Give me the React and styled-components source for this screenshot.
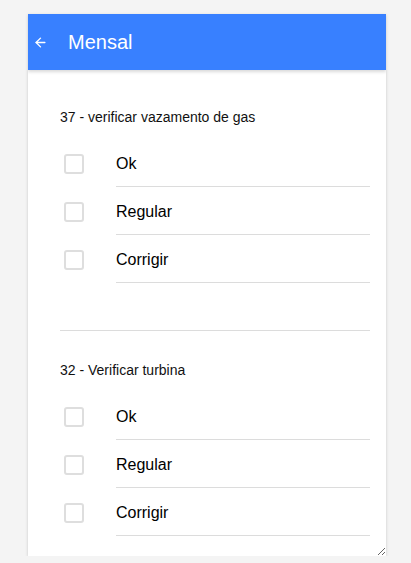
import React from 'react';
import styled, { createGlobalStyle } from 'styled-components';
import { ArrowLeft } from 'lucide-react';

const GlobalStyle = createGlobalStyle`
  html, body {
    margin: 0;
    padding: 0;
    background: #f4f4f4;
    font-family: "Liberation Sans", Arial, sans-serif;
  }
`;

const Page = styled.div`
  padding: 14px 0 0 28px;
`;

const Card = styled.div`
  width: 358px;
  height: 542px;
  background: #fff;
  box-shadow: 0 1px 3px rgba(0, 0, 0, 0.18);
  resize: both;
  overflow: hidden;
  display: flex;
  flex-direction: column;
`;

const Toolbar = styled.div`
  height: 56px;
  flex-shrink: 0;
  background: #3880ff;
  display: flex;
  align-items: center;
  color: #fff;
  box-shadow: 0 2px 3px rgba(0, 0, 0, 0.15);
  position: relative;
  z-index: 1;
`;

const BackButton = styled.button`
  background: none;
  border: 0;
  padding: 0;
  margin: 0;
  width: 24px;
  height: 24px;
  display: flex;
  align-items: center;
  justify-content: center;
  color: #fff;
`;

const Title = styled.h1`
  margin: 1px 0 0 16px;
  font-size: 20px;
  font-weight: 400;
`;

const Content = styled.div`
  flex: 1;
  padding: 37px 16px 0 32px;
`;

const Section = styled.div`
  & + & {
    border-top: 1px solid #dcdcdc;
    margin-top: 47px;
    padding-top: 29px;
  }
`;

const Question = styled.div`
  font-size: 14px;
  line-height: 20px;
  color: #111;
  margin-bottom: 12px;
`;

const Row = styled.label`
  display: flex;
  height: 48px;
`;

const BoxCell = styled.div`
  width: 56px;
  display: flex;
  align-items: center;
  padding: 2px 0 0 4px;
  box-sizing: border-box;
`;

const Box = styled.span`
  width: 20px;
  height: 20px;
  box-sizing: border-box;
  border: 2px solid #dedede;
  border-radius: 3px;
`;

const Label = styled.div`
  flex: 1;
  display: flex;
  align-items: center;
  font-size: 16px;
  color: #000;
  border-bottom: 1px solid #dcdcdc;
  padding-top: 2px;
`;

const sections = [
  { title: '37 - verificar vazamento de gas', options: ['Ok', 'Regular', 'Corrigir'] },
  { title: '32 - Verificar turbina', options: ['Ok', 'Regular', 'Corrigir'] },
];

const App = () => (
  <Page>
    <GlobalStyle />
    <Card>
      <Toolbar>
        <BackButton>
          <ArrowLeft size={15} strokeWidth={2.2} />
        </BackButton>
        <Title>Mensal</Title>
      </Toolbar>
      <Content>
        {sections.map((s) => (
          <Section key={s.title}>
            <Question>{s.title}</Question>
            {s.options.map((o) => (
              <Row key={o}>
                <BoxCell>
                  <Box />
                </BoxCell>
                <Label>{o}</Label>
              </Row>
            ))}
          </Section>
        ))}
      </Content>
    </Card>
  </Page>
);

export default App;
